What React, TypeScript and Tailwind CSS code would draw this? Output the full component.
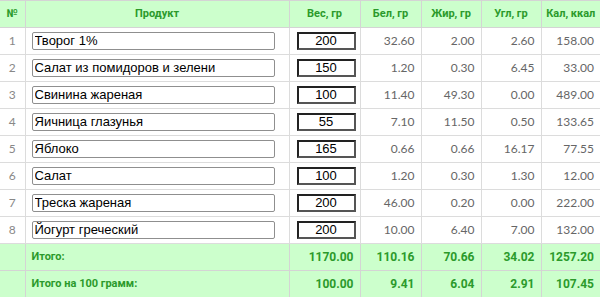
import React, { useState } from "react";

type Item = {
  name: string;
  weight: string;
  protein: string;
  fat: string;
  carbs: string;
  kcal: string;
};

const items: Item[] = [
  { name: "Творог 1%", weight: "200", protein: "32.60", fat: "2.00", carbs: "2.60", kcal: "158.00" },
  { name: "Салат из помидоров и зелени", weight: "150", protein: "1.20", fat: "0.30", carbs: "6.45", kcal: "33.00" },
  { name: "Свинина жареная", weight: "100", protein: "11.40", fat: "49.30", carbs: "0.00", kcal: "489.00" },
  { name: "Яичница глазунья", weight: "55", protein: "7.10", fat: "11.50", carbs: "0.50", kcal: "133.65" },
  { name: "Яблоко", weight: "165", protein: "0.66", fat: "0.66", carbs: "16.17", kcal: "77.55" },
  { name: "Салат", weight: "100", protein: "1.20", fat: "0.30", carbs: "1.30", kcal: "12.00" },
  { name: "Треска жареная", weight: "200", protein: "46.00", fat: "0.20", carbs: "0.00", kcal: "222.00" },
  { name: "Йогурт греческий", weight: "200", protein: "10.00", fat: "6.40", carbs: "7.00", kcal: "132.00" },
];

const head = "h-[27px] border-b border-l border-[#d4d4d4] bg-[#ccffcc] whitespace-nowrap text-[11px] font-bold text-[#2b9a2b]";
const cell = "h-[27px] border-b border-l border-[#dcdcdc] bg-white";
const num = "pr-[6px] text-right text-[12px] text-[#666]";
const footBase = "h-[27px] border-b border-l border-[#d4d4d4] bg-[#ccffcc] whitespace-nowrap font-bold text-[#2b9a2b]";
const foot = `${footBase} pr-[6px] text-right text-[12px]`;
const footLabel = `${footBase} pl-[6px] text-left text-[11px]`;

export default function App() {
  const [rows, setRows] = useState(items);

  const update = (i: number, key: "name" | "weight", value: string) => {
    setRows((prev) => prev.map((r, j) => (j === i ? { ...r, [key]: value } : r)));
  };

  return (
    <div
      className="w-[600px] h-[297px] overflow-hidden bg-white"
      style={{ fontFamily: 'Roboto, "DejaVu Sans", sans-serif' }}
    >
      <table className="w-[600px] table-fixed border-collapse border-t border-[#d4d4d4]">
        <colgroup>
          <col className="w-[25px]" />
          <col className="w-[264px]" />
          <col className="w-[71px]" />
          <col className="w-[61px]" />
          <col className="w-[60px]" />
          <col className="w-[60px]" />
          <col className="w-[59px]" />
        </colgroup>
        <thead>
          <tr>
            <th className={`${head} border-l-0`}>№</th>
            <th className={head}>Продукт</th>
            <th className={head}>Вес, гр</th>
            <th className={head}>Бел, гр</th>
            <th className={head}>Жир, гр</th>
            <th className={head}>Угл, гр</th>
            <th className={head}>Кал, ккал</th>
          </tr>
        </thead>
        <tbody className="font-['Lato',sans-serif]">
          {rows.map((r, i) => (
            <tr key={i}>
              <td className={`${cell} border-l-0 text-center text-[12px] text-[#888]`}>{i + 1}</td>
              <td className={`${cell} pl-[6px]`}>
                <input
                  value={r.name}
                  onChange={(e) => update(i, "name", e.target.value)}
                  className="block h-[18px] w-[243px] rounded-[2px] border border-[#8f8f8f] bg-white px-[2px] text-[13px] text-black outline-none font-['Liberation_Sans',sans-serif]"
                />
              </td>
              <td className={`${cell} pl-[7px]`}>
                <input
                  value={r.weight}
                  onChange={(e) => update(i, "weight", e.target.value)}
                  className="block h-[18px] w-[59px] border-2 border-t-[#222] border-l-[#222] border-b-[#555] border-r-[#555] bg-white text-center text-[13px] text-black outline-none font-['Liberation_Sans',sans-serif]"
                />
              </td>
              <td className={`${cell} ${num}`}>{r.protein}</td>
              <td className={`${cell} ${num}`}>{r.fat}</td>
              <td className={`${cell} ${num}`}>{r.carbs}</td>
              <td className={`${cell} ${num}`}>{r.kcal}</td>
            </tr>
          ))}
        </tbody>
        <tfoot>
          <tr>
            <td className={`${footBase} border-l-0`}></td>
            <td className={footLabel}>Итого:</td>
            <td className={foot}>1170.00</td>
            <td className={foot}>110.16</td>
            <td className={foot}>70.66</td>
            <td className={foot}>34.02</td>
            <td className={foot}>1257.20</td>
          </tr>
          <tr>
            <td className={`${footBase} border-l-0`}></td>
            <td className={footLabel}>Итого на 100 грамм:</td>
            <td className={foot}>100.00</td>
            <td className={foot}>9.41</td>
            <td className={foot}>6.04</td>
            <td className={foot}>2.91</td>
            <td className={foot}>107.45</td>
          </tr>
        </tfoot>
      </table>
    </div>
  );
}
